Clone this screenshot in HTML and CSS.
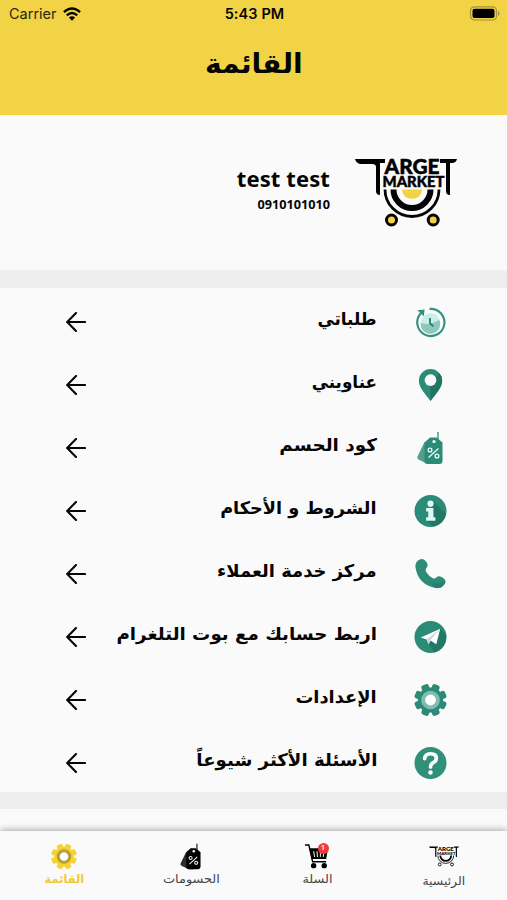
FILE: index.html
```html
<!DOCTYPE html>
<html lang="ar" dir="rtl">
<head>
<meta charset="utf-8">
<title>القائمة</title>
<link rel="stylesheet" href="styles.css">
</head>
<body>
<svg class="defs" aria-hidden="true">
  <symbol id="arrow" viewBox="0 0 20 20"><path d="M19 10H1.5M10 1 1.2 10l8.8 9" fill="none" stroke="currentColor" stroke-width="2.1" stroke-linecap="round"/></symbol>
  <symbol id="logo" viewBox="0 0 102 70">
    <path d="M0 1h30v4h-5v32q-4 0-4-4V9q0-3-4-3H5Q1 5 0 1zM85 1h17q-1 4-5 4h-2v32q-4 0-4-4V5h-6z"/>
    <text x="29.500" y="16" textLength="55" lengthAdjust="spacingAndGlyphs" class="logo-text" font-size="20.500">ARGE</text>
    <text x="27.500" y="29" textLength="62" lengthAdjust="spacingAndGlyphs" class="logo-text" font-size="15">MARKET</text>
    <path d="M30 31.500a27 27 0 0 0 54 0" fill="none" stroke="currentColor" stroke-width="2.800"/>
    <path d="M38.500 31.500a18.500 18.500 0 0 0 37 0" fill="none" stroke="currentColor" stroke-width="6"/>
    <path d="M47 31.500a10 9.500 0 0 0 20 0z" class="logo-accent"/>
    <circle cx="36.500" cy="62" r="5" class="logo-accent" stroke="currentColor" stroke-width="3"/>
    <circle cx="78.200" cy="62" r="5" class="logo-accent" stroke="currentColor" stroke-width="3"/>
  </symbol>
  <symbol id="gear" viewBox="0 0 34 34">
    <g fill="currentColor"><circle cx="17" cy="17" r="13"/>
    <rect x="13" y=".2" width="8" height="33.600" rx="2.200" transform="rotate(22.500 17 17)"/><rect x="13" y=".2" width="8" height="33.600" rx="2.200" transform="rotate(67.500 17 17)"/><rect x="13" y=".2" width="8" height="33.600" rx="2.200" transform="rotate(112.500 17 17)"/><rect x="13" y=".2" width="8" height="33.600" rx="2.200" transform="rotate(157.500 17 17)"/></g>
    <circle cx="17" cy="17" r="7.600" fill="#fdfdfd" class="gear-ring" stroke-width="4"/>
  </symbol>
  <symbol id="tag" viewBox="0 0 28 34">
    <path d="M8 11 1 25.500q-1 2 1 3L11 33h6z" fill="currentColor" opacity=".82"/>
    <path d="M13.500 6.500H20l6 5V30q0 3-3 3H11q-3 0-3-3V11.500z" fill="currentColor"/>
    <path d="M21.500 1v8" stroke="currentColor" stroke-width="1.300"/>
    <circle cx="17.500" cy="10.500" r="1.600" fill="#fff"/>
    <g fill="none" stroke="#e8fffa" stroke-width="1.300"><path d="m12 26.500 10-9"/><circle cx="13.500" cy="19" r="1.900"/><circle cx="20.500" cy="25" r="1.900"/></g>
  </symbol>
</svg>

<header class="header">
  <div class="status" dir="ltr">
    <div class="carrier">Carrier
      <svg width="18" height="14" viewBox="0 0 18 14"><g fill="none" stroke="#080700" stroke-width="2.400"><path d="M.9 5.100q8.100-7.400 16.200 0"/><path d="M3.800 8.300q5.200-4.500 10.400 0"/></g><path d="M5.900 10.500q3.100-2.400 6.200 0L9 13.700z"/></svg>
    </div>
    <div class="clock">5:43 PM</div>
    <div class="battery"><svg width="31" height="15" viewBox="0 0 31 15"><rect x="1.500" y=".8" width="26" height="13.200" rx="4" fill="none" stroke="#a39339" stroke-width="1.200"/><rect x="3.500" y="2.800" width="22" height="9.200" rx="2"/><path d="M29 5v5q3-2.500 0-5z" fill="#a39339"/></svg></div>
  </div>
  <h1 class="title"><span>القائمة</span></h1>
</header>

<section class="profile">
  <svg class="logo"><use href="#logo"/></svg>
  <div class="user"><div class="name">test test</div><div class="phone">0910101010</div></div>
</section>

<main class="menu">
  <a class="row"><svg class="icon" viewBox="0 0 34 34"><circle cx="17" cy="18" r="10" fill="#cceee8"/><path d="M7 18q4 1 7 1t12-4a10 10 0 1 1-19 3z" fill="#8bc9bd"/><path d="M16 3.500a14 14 0 1 1-9 4.500" fill="none" stroke="#348f7b" stroke-width="2.200"/><path d="m3.500 5 7.500-1-1 7z" fill="#348f7b"/><path d="M16.500 13v5.500l3.500 3" fill="none" stroke="#237764" stroke-width="1.800"/></svg><span class="label l1">طلباتي</span><svg class="arrow"><use href="#arrow"/></svg></a>
  <a class="row"><svg class="icon" viewBox="0 0 34 34"><path d="M17 .5A12 12 0 0 0 5 12.500C5 20 12 26 17 33.500 22 26 29 20 29 12.500A12 12 0 0 0 17 .5z" fill="#2c8b76"/><path d="M17 33.500C22 26 29 20 29 12.500Q29 8 26 5L17 18z" fill="#1f7562"/><circle cx="17" cy="12" r="6" fill="#fafafa"/></svg><span class="label l2">عناويني</span><svg class="arrow"><use href="#arrow"/></svg></a>
  <a class="row"><svg class="icon"><use href="#tag"/></svg><span class="label l3">كود الحسم</span><svg class="arrow"><use href="#arrow"/></svg></a>
  <a class="row"><svg class="icon" viewBox="0 0 34 34"><circle cx="17" cy="17" r="16.500" fill="#2c8b76"/><path d="M20 7 33 20a16.500 16.500 0 0 1-13 13l-7-6z" fill="#217866"/><g fill="#dffaf5"><circle cx="17" cy="9.500" r="3.200"/><path d="M12.500 14H20v9.500h2V27h-9.500v-3.500h2.200v-6h-2.200z"/></g></svg><span class="label l4">الشروط و الأحكام</span><svg class="arrow"><use href="#arrow"/></svg></a>
  <a class="row"><svg class="icon" viewBox="0 0 34 34"><path d="M5 2.500Q9 0 12 3.500q3.500 4 1 7-2 2 0 5 2.500 4 6 5.500 2 1.500 4-.5 3-2.500 7 .5l1.500 1.500q2.500 3-1.500 6.500-3 4-10 2Q4 26.500 1.500 10 1 5 5 2.500z" fill="#2d8c77"/><path d="M19 25q6 4 13-1.500 1 4-3 7-4 2-10-.5z" fill="#1f7562" opacity=".45"/></svg><span class="label l5">مركز خدمة العملاء</span><svg class="arrow"><use href="#arrow"/></svg></a>
  <a class="row"><svg class="icon" viewBox="0 0 34 34"><circle cx="17" cy="17" r="16.500" fill="#2c8b76"/><path d="m27 8 6 7a16.500 16.500 0 0 1-12 18l-6-9z" fill="#217866"/><path d="m7 17.500 20-9-4 16-6-4-2 4-2-5z" fill="#fff"/><path d="m13 19.500 14-11-10.500 12-1.500 4z" fill="#cbd6da"/></svg><span class="label l6">اربط حسابك مع بوت التلغرام</span><svg class="arrow"><use href="#arrow"/></svg></a>
  <a class="row"><svg class="icon"><use href="#gear"/></svg><span class="label l7">الإعدادات</span><svg class="arrow"><use href="#arrow"/></svg></a>
  <a class="row"><svg class="icon" viewBox="0 0 34 34"><circle cx="17" cy="17" r="16.500" fill="#30907a"/><path d="M11 12.500Q11.500 7.500 17 7.500q6 0 6 4.500 0 3-3.500 4.800-2.500 1.500-2.500 4.200" fill="none" stroke="#fff" stroke-width="3.800" stroke-linecap="round"/><circle cx="17" cy="26.800" r="2.300" fill="#fff"/></svg><span class="label l8">الأسئلة الأكثر شيوعاً</span><svg class="arrow"><use href="#arrow"/></svg></a>
</main>
<div class="rest"></div>

<nav class="tabs">
  <a class="tab home"><svg class="tab-icon tab-logo"><use href="#logo"/></svg><span>الرئيسية</span></a>
  <a class="tab cart"><svg class="tab-icon" viewBox="0 0 27 27"><path d="M1 1.500h4L9 19h14" fill="none" stroke="#000" stroke-width="1.500"/><path d="M5.500 5H25l-2 11H8z"/><path d="m10 8 1 6m2.500-6 .5 6m3-6v6m3.500-6-.5 6" stroke="#fff" stroke-width="1"/><circle cx="10" cy="23" r="2.800"/><circle cx="21" cy="23" r="2.800"/></svg><b class="badge">1</b><span>السلة</span></a>
  <a class="tab deals"><svg class="tab-icon"><use href="#tag"/></svg><span>الحسومات</span></a>
  <a class="tab active"><svg class="tab-icon"><use href="#gear"/></svg><span>القائمة</span></a>
</nav>
</body>
</html>
```
FILE: styles.css
```css
* { box-sizing: border-box; }
body { margin: 0; width: 507px; height: 900px; overflow: hidden; display: flex; flex-direction: column; background: #fafafa; color: #050505; font-family: "DejaVu Sans", sans-serif; --ring: #81bdae; --accent: #f2d345; --logo-stroke: .5px; }
.defs { display: none; }
.header { height: 115px; background: #f2d345; }
.status { display: grid; grid-template-columns: 1fr auto 1fr; align-items: center; height: 27px; padding: 0 7px 0 9px; font: 14.5px/27px Inter, sans-serif; }
.carrier { display: flex; align-items: center; gap: 6px; color: #2b2610; }
.clock { font-weight: 600; letter-spacing: .1px; }
.battery { display: flex; justify-content: flex-end; }
.title { margin: 17px 0 0; font-size: 27px; line-height: 40px; text-align: center; }
.title span { display: inline-block; transform: scaleX(1.045); }
.profile { display: flex; align-items: flex-start; height: 173px; border-bottom: 18px solid #eee; padding: 43px 50px 0 0; }
.logo { width: 102px; height: 70px; direction: ltr; }
.logo-text { font-family: Lato, sans-serif; font-weight: 900; direction: ltr; stroke: currentColor; stroke-width: var(--logo-stroke); }
.logo-accent { fill: var(--accent); }
.user { margin: 5px 25px 0 0; direction: ltr; text-align: right; font-family: "Noto Sans", sans-serif; font-weight: 700; }
.name { font-size: 22px; line-height: 30px; letter-spacing: .1px; }
.phone { font-size: 12.7px; line-height: 23px; }
.menu { height: 521px; border-bottom: 17px solid #eee; }
.row { display: flex; align-items: center; height: 63px; padding: 5px 60px 0 66px; }
.icon { width: 33px; height: 34px; color: #2c8b76; flex: none; }
.label { margin-right: 37px; padding-bottom: 6px; font-weight: 700; font-size: 17.5px; line-height: 28px; white-space: nowrap; transform-origin: right; transform: scaleX(1.02); }
.l1 { transform: scaleX(.96); }
.l2 { transform: scaleX(.96); }
.l3 { transform: scaleX(1.05); }
.l4 { transform: scaleX(1.012); }
.l5 { transform: scaleX(1.025); }
.l6 { transform: scaleX(1.042); }
.l8 { transform: scaleX(1.038); }
.arrow { width: 20px; height: 20px; margin-right: auto; flex: none; }
.gear-ring { stroke: var(--ring); }
.rest { flex: 1; }
.tabs { display: grid; grid-template-columns: repeat(4, 1fr); height: 69px; background: #fafafa; box-shadow: 0 -1px 7px rgba(0,0,0,.35); }
.tab { position: relative; display: flex; flex-direction: column; align-items: center; padding-top: 12px; font-size: 11.5px; line-height: 18px; color: #444; }
.tab-icon { width: 26px; height: 27px; color: #000; }
.tab span { white-space: nowrap; }
.home { --accent: #fafafa; --logo-stroke: 0; }
.home span { padding-top: 2px; transform: scaleX(1.08); }
.cart span, .deals span { transform: scaleX(1.12); }
.cart span, .deals, .active { position: relative; left: 1px; }
.tab-logo { width: 30px; direction: ltr; }
.badge { position: absolute; left: 64px; top: 12px; width: 11px; height: 11px; border-radius: 50%; background: #f03b36; color: #fff; font: 700 7px/11px Roboto, sans-serif; text-align: center; }
.active { color: #efc93f; --ring: #b8a136; }
.active span { font-weight: 700; transform: scaleX(1); }
.active .tab-icon { color: #f5d332; }
```
